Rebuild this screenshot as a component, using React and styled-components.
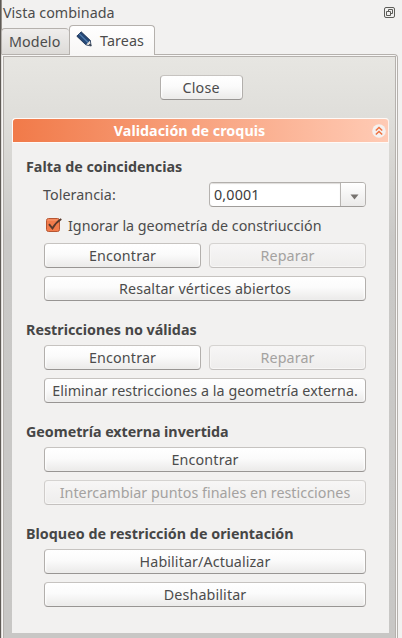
import React from "react";
import styled, { createGlobalStyle, css } from "styled-components";

const Global = createGlobalStyle`
  *{box-sizing:border-box}
  body{margin:0;background:#f2f1f0;color:#4c4c4c;font:14.3px/20px "Noto Sans","Open Sans",sans-serif;overflow:hidden}
`;
const Dock = styled.main`
  width:402px;height:638px;display:flex;flex-direction:column;
  border-left:1px solid #5e5a55;box-shadow:inset 1px 0 #96918b;
`;
const Text = styled.span`
  display:inline-block;white-space:nowrap;
  letter-spacing:${p => p.$track || 0}px;
  margin-right:${p => -(p.$track || 0)}px;
`;
const TitleBar = styled.header`
  height:25px;flex:none;display:flex;justify-content:space-between;align-items:center;padding:1px 7px 0 2px;
  svg{margin-bottom:2px}
`;
const Tabs = styled.nav`
  height:29px;flex:none;display:flex;align-items:flex-end;padding-left:0;
`;
const Tab = styled.div`
  display:flex;align-items:center;border:1px solid #b5b1ad;border-bottom:0;border-radius:4px 4px 0 0;
  svg{margin-bottom:2px}
  ${p => p.$active ? css`
    width:86px;height:30px;margin-bottom:-1px;padding:0 0 0 6px;gap:7px;
    background:linear-gradient(#fff,#f7f6f5);z-index:1;
  ` : css`
    width:68px;height:26px;padding:0 0 0 7px;border-right:0;
    background:linear-gradient(#efedec,#dddbd8);
  `}
`;
const Pane = styled.section`
  flex:1;width:397px;border:1px solid #b5b1ad;border-bottom:0;border-left-color:#dedbd8;
  border-radius:0 4px 0 0;padding:1px 1px 0;background:#f8f7f6;
`;
const Area = styled.div`
  height:100%;border:1px solid #b5b1ad;border-bottom:0;padding:18px 5px 0 8px;
  background:linear-gradient(#e7e6e2 0,#dfdeda 60px,#cac9c7 180px,#c8c7c5 100%);
`;
const Button = styled.button`
  height:25px;width:${p => p.$width || "100%"};padding:0;display:flex;align-items:center;justify-content:center;
  font:inherit;color:#4c4c4c;border:1px solid;border-color:#c6c3c0 #b2afac #989593 #b2afac;border-radius:4px;
  background:linear-gradient(#fff 0,#fbfbfb 45%,#ebeae9 100%);
  box-shadow:inset 2px 0 2px -1px #fff,inset -2px 0 2px -1px #fff;
  &:disabled{color:#a4a2a0;border-color:#d5d3d1 #cfccca #c4c1bf;background:linear-gradient(#f7f6f6,#eeedec);
  box-shadow:inset 0 0 0 1px #f7f6f5}
`;
const CloseRow = styled.div`display:flex;justify-content:center;margin-bottom:18px;`;
const Group = styled.article`width:377px;height:515px;background:#f2f1f0;border-radius:4px 4px 0 0;`;
const GroupHeader = styled.h1`
  margin:0;height:25px;border:1px solid #fffaf7;border-right:1px solid #fff3ed;border-radius:4px 4px 0 0;
  background:linear-gradient(90deg,#f17a49,#ffcbb5);color:#fff;font-size:14.3px;font-weight:700;
  display:grid;grid-template-columns:1fr 22px;align-items:center;justify-items:center;
  svg{margin-left:3px}
`;
const Body = styled.div`padding:13px 23px 0 14px;display:flex;flex-direction:column;gap:18px;`;
const Section = styled.section``;
const Heading = styled.h2`margin:0 0 4px;height:22px;line-height:22px;font-size:14.3px;font-weight:700;color:#464646;`;
const Rows = styled.div`padding-left:18px;display:flex;flex-direction:column;gap:8px;`;
const Pair = styled.div`display:grid;grid-template-columns:157px 157px;gap:8px;align-items:center;`;
const Label = styled.label`margin-left:-1px;`;
const Combo = styled.div`
  height:25px;border:1px solid;border-color:#b2afac #b5b2af #a09d9a;border-radius:4px;display:flex;background:#fff;
  color:#3c3c3c;overflow:hidden;
`;
const Value = styled.div`flex:1;padding:2px 0 0 4px;box-shadow:inset 0 1px 1px #dedcda;`;
const Arrow = styled.div`
  width:25px;border-left:1px solid #b8b5b2;background:linear-gradient(#fff,#ebeae9);
  display:flex;align-items:center;justify-content:center;padding:4px 0 0 2px;
`;
const CheckRow = styled.div`
  height:20px;display:flex;align-items:center;gap:5px;padding:2px 0 0 1px;
  svg{margin-bottom:2px}
`;

const FloatIcon = () => (
  <svg width="11" height="11" viewBox="0 0 11 11" fill="none" stroke="#5d5d59">
    <rect x=".5" y=".5" width="10" height="10" rx="1.5" />
    <path d="M4.5 4.5v-2h4v4h-2M2.5 4.5h4v4h-4z" />
  </svg>
);
const Pencil = () => (
  <svg width="17" height="17" viewBox="0 0 17 17">
    <path d="M.8 5.2 5.2.8 14.2 9.3 15.2 15 9.8 13.8Z" fill="#254877" stroke="#14294a" strokeWidth=".8" />
    <path d="M3.3 2.9 12 11.5" stroke="#527eaf" strokeWidth="1.3" />
    <path d="m10.2 13.4 3.6-3.6 1.2 5Z" fill="#e5e0da" />
    <path d="m12.7 14.1 1.7-1.7.8 2.7Z" fill="#172231" />
  </svg>
);
const Collapse = () => (
  <svg width="14" height="14" viewBox="0 0 14 14">
    <circle cx="7" cy="7" r="6.8" fill="#f5f1ef" />
    <path d="m3.8 6.5 3.2-3 3.2 3M3.8 10.5l3.2-3 3.2 3" fill="none" stroke="#ee713f" strokeWidth="1.5" />
  </svg>
);
const Check = () => (
  <svg width="18" height="16" viewBox="0 0 18 16">
    <rect x="1.5" y="1.5" width="13" height="13" rx="2" fill="#f27b4b" stroke="#b65632" />
    <path d="M2.5 3h11" stroke="#fa9b73" />
    <path d="m4 7.2 3.4 4.2C9.8 7.3 12 4.6 16.3 2" fill="none" stroke="#59392c" strokeWidth="1.9" />
  </svg>
);

export default function App() {
  return (
    <>
      <Global />
      <Dock>
        <TitleBar><Text $track={0.04}>Vista combinada</Text><FloatIcon /></TitleBar>
        <Tabs>
          <Tab><Text $track={0.1}>Modelo</Text></Tab>
          <Tab $active><Pencil /><Text $track={0.1}>Tareas</Text></Tab>
        </Tabs>
        <Pane>
          <Area>
            <CloseRow><Button $width="83px"><Text $track={0.2}>Close</Text></Button></CloseRow>
            <Group>
              <GroupHeader><Text $track={0.03}>Validación de croquis</Text><Collapse /></GroupHeader>
              <Body>
                <Section>
                  <Heading><Text>Falta de coincidencias</Text></Heading>
                  <Rows>
                    <Pair>
                      <Label><Text $track={0.05}>Tolerancia:</Text></Label>
                      <Combo>
                        <Value><Text $track={0.15}>0,0001</Text></Value>
                        <Arrow><svg width="9" height="6" viewBox="0 0 9 6"><path d="M.5.5h8L4.5 5.5Z" fill="#77736f" /></svg></Arrow>
                      </Combo>
                    </Pair>
                    <CheckRow><Check /><Text>Ignorar la geometría de constriucción</Text></CheckRow>
                    <Pair>
                      <Button><Text $track={0.15}>Encontrar</Text></Button>
                      <Button disabled><Text $track={0.1}>Reparar</Text></Button>
                    </Pair>
                    <Button><Text $track={0.11}>Resaltar vértices abiertos</Text></Button>
                  </Rows>
                </Section>
                <Section>
                  <Heading><Text>Restricciones no válidas</Text></Heading>
                  <Rows>
                    <Pair>
                      <Button><Text $track={0.15}>Encontrar</Text></Button>
                      <Button disabled><Text $track={0.1}>Reparar</Text></Button>
                    </Pair>
                    <Button><Text $track={0.05}>Eliminar restricciones a la geometría externa.</Text></Button>
                  </Rows>
                </Section>
                <Section>
                  <Heading><Text $track={-0.03}>Geometría externa invertida</Text></Heading>
                  <Rows>
                    <Button><Text $track={0.15}>Encontrar</Text></Button>
                    <Button disabled><Text $track={0.03}>Intercambiar puntos finales en resticciones</Text></Button>
                  </Rows>
                </Section>
                <Section>
                  <Heading><Text $track={0.03}>Bloqueo de restricción de orientación</Text></Heading>
                  <Rows>
                    <Button><Text $track={0.1}>Habilitar/Actualizar</Text></Button>
                    <Button><Text $track={0.12}>Deshabilitar</Text></Button>
                  </Rows>
                </Section>
              </Body>
            </Group>
          </Area>
        </Pane>
      </Dock>
    </>
  );
}
